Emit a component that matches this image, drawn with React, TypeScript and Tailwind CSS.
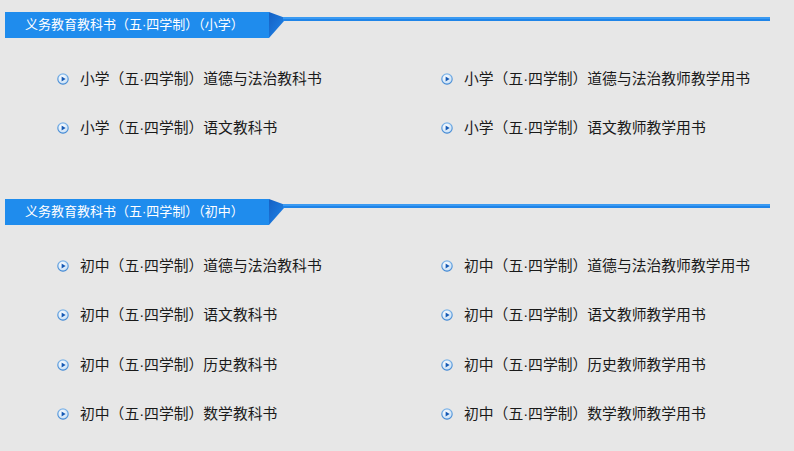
import React from 'react';

const sections = [
  {
    title: '义务教育教科书（五·四学制）（小学）',
    top: 'pt-[12px]',
    items: [
      '小学（五·四学制）道德与法治教科书',
      '小学（五·四学制）道德与法治教师教学用书',
      '小学（五·四学制）语文教科书',
      '小学（五·四学制）语文教师教学用书',
    ],
  },
  {
    title: '义务教育教科书（五·四学制）（初中）',
    top: 'pt-[46px]',
    items: [
      '初中（五·四学制）道德与法治教科书',
      '初中（五·四学制）道德与法治教师教学用书',
      '初中（五·四学制）语文教科书',
      '初中（五·四学制）语文教师教学用书',
      '初中（五·四学制）历史教科书',
      '初中（五·四学制）历史教师教学用书',
      '初中（五·四学制）数学教科书',
      '初中（五·四学制）数学教师教学用书',
    ],
  },
];

function BulletIcon() {
  return (
    <svg width="12" height="12" viewBox="0 0 12 12" className="shrink-0">
      <defs>
        <radialGradient id="bulletBg" cx="40%" cy="35%" r="70%">
          <stop offset="0%" stopColor="#ffffff" />
          <stop offset="100%" stopColor="#c4ddf5" />
        </radialGradient>
        <linearGradient id="bulletRing" x1="0" y1="0" x2="0" y2="1">
          <stop offset="0%" stopColor="#7fb5e8" />
          <stop offset="100%" stopColor="#3f86d2" />
        </linearGradient>
      </defs>
      <circle cx="6" cy="6" r="5.2" fill="url(#bulletBg)" stroke="url(#bulletRing)" strokeWidth="1.2" />
      <path d="M4.6 3.4 L8.6 6 L4.6 8.6 Z" fill="#1559b4" />
    </svg>
  );
}

function SectionHeader({ title }: { title: string }) {
  return (
    <div className="flex items-start h-[26px]">
      <div className="h-[26px] ml-[5px] w-[264px] bg-[#1f8ced] text-white text-[13px] leading-[26px] pl-[20px] whitespace-nowrap">
        {title}
      </div>
      {/* notch + line */}
      <svg width="501" height="26" viewBox="0 0 501 26" className="shrink-0">
        <defs>
          <linearGradient id="notch" x1="0" y1="0" x2="1" y2="1">
            <stop offset="0%" stopColor="#1560c4" />
            <stop offset="100%" stopColor="#1f86ea" />
          </linearGradient>
        </defs>
        <polygon points="0,0 15,5.5 15,9 0,26" fill="url(#notch)" />
        <rect x="14" y="5" width="487" height="2" fill="#3a9af2" />
        <rect x="14" y="7" width="487" height="2" fill="#1f84e8" />
      </svg>
    </div>
  );
}

export default function App() {
  return (
    <div
      className="w-[794px] h-[451px] bg-[#e7e7e7] overflow-hidden text-[#1a1a1a]"
      style={{ fontFamily: '"Liberation Sans", "Noto Sans CJK SC", sans-serif' }}
    >
      {sections.map((section) => (
        <div key={section.title} className={section.top}>
          <SectionHeader title={section.title} />
          <div className="grid grid-cols-[384px_384px] pl-[57px] pt-[16px]">
            {section.items.map((item) => (
              <div key={item} className="flex items-center gap-[11px] h-[49.5px]">
                <BulletIcon />
                <span className="text-[14.8px] whitespace-nowrap">{item}</span>
              </div>
            ))}
          </div>
        </div>
      ))}
    </div>
  );
}
